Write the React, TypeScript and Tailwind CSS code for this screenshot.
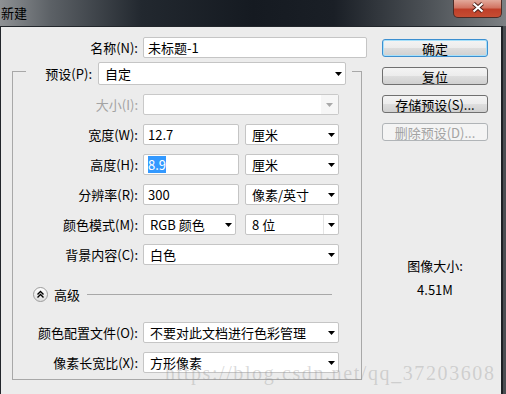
import type { ReactNode } from "react";
import clsx from "clsx";

const fieldBox =
  "flex h-[21px] items-center rounded-[2px] border border-[#c5c5c5] bg-white";

function Arrow({ disabled }: { disabled?: boolean }) {
  return (
    <svg width="7" height="4" viewBox="0 0 7 4" className="block">
      <path d="M0 0h7L3.5 4z" fill={disabled ? "#a9a9a9" : "#000"} />
    </svg>
  );
}

type SelectProps = {
  value?: ReactNode;
  className?: string;
  split?: boolean;
  disabled?: boolean;
};

function Select({ value, className, split, disabled }: SelectProps) {
  return (
    <div
      className={clsx(
        fieldBox,
        disabled && "border-[#c9c9c9] bg-[#eeeeee]",
        className,
      )}
    >
      <span className="flex-1 whitespace-nowrap pl-[6px]">{value}</span>
      {split && <span className="h-full w-px bg-[#e4e4e4]" />}
      <span
        className={clsx(
          "flex h-full items-center justify-center",
          split ? "w-[14px]" : "w-[13px]",
          disabled && "w-[17px] bg-[#f6f6f6]",
        )}
      >
        <Arrow disabled={disabled} />
      </span>
    </div>
  );
}

function Label({
  children,
  disabled,
}: {
  children: ReactNode;
  disabled?: boolean;
}) {
  return (
    <span
      className={clsx(
        "w-[125px] shrink-0 whitespace-nowrap text-right",
        disabled && "text-[#a3a3a3]",
      )}
    >
      {children}
    </span>
  );
}

function Row({ children }: { children: ReactNode }) {
  return <div className="flex h-[21px] items-center gap-[5px]">{children}</div>;
}

const btn =
  "flex h-[18px] items-center justify-center rounded-[3px] border bg-[linear-gradient(#f4f4f4,#ececec_50%,#dedede_50%,#d0d0d0)]";

export default function App() {
  return (
    <div className="flex h-[394px] w-[506px] flex-col overflow-hidden bg-[#5a5e62] font-['Noto_Sans_CJK_SC',sans-serif] text-[13px] leading-[19px] text-black">
      {/* title bar */}
      <div className="flex h-[26px] shrink-0 items-start justify-between bg-[linear-gradient(90deg,#8e9194_0%,#5c6166_10%,#22282f_28%,#151a21_50%,#1a1f26_66%,#4b5055_84%,#7c8083_100%)]">
        <span className="pl-px pt-[3px]">新建</span>
        <button className="mr-[4px] flex h-[18px] w-[49px] items-start justify-center rounded-b-[5px] border border-t-0 border-[#4b2c27] bg-[linear-gradient(#e2a99b,#d27563_45%,#bf3f29_55%,#c64d33)] pt-[2px]">
          <svg width="14" height="11" viewBox="0 0 14 11">
            <path
              d="M2.5 1.5L11.5 9.5M11.5 1.5L2.5 9.5"
              stroke="#4a1e16"
              strokeWidth="4"
            />
            <path
              d="M2.5 1.5L11.5 9.5M11.5 1.5L2.5 9.5"
              stroke="#fff"
              strokeWidth="2.2"
            />
          </svg>
        </button>
      </div>

      <div className="flex min-h-0 flex-1">
        {/* client area */}
        <div className="relative flex flex-1 border-l border-t border-[#22262b] bg-[#ececec]">
          <div className="w-[370px] shrink-0">
            <div className="mt-[10px] flex h-[20px] items-center gap-[5px]">
              <span className="w-[137px] text-right">名称(N):</span>
              <div className={clsx(fieldBox, "h-[20px] w-[224px] pl-[4px]")}>
                未标题-1
              </div>
            </div>

            <fieldset className="ml-[11px] w-[350px] border border-[#a8a8a8] pb-[6px]">
              <legend className="ml-[13px] flex items-center pr-[6px] pt-[5px]">
                <span className="w-[66px] whitespace-nowrap text-right">预设(P):</span>
                <Select className="ml-[6px] h-[23px] w-[248px]" value="自定" />
              </legend>

              <div className="mt-[9px] flex flex-col gap-[9px]">
                <Row>
                  <Label disabled>大小(I):</Label>
                  <Select className="w-[196px]" disabled />
                </Row>
                <Row>
                  <Label>宽度(W):</Label>
                  <div className={clsx(fieldBox, "w-[96px] pl-[4px]")}>12.7</div>
                  <Select className="ml-[1px] w-[94px]" value="厘米" />
                </Row>
                <Row>
                  <Label>高度(H):</Label>
                  <div className={clsx(fieldBox, "w-[96px] pl-[4px]")}>
                    <span className="bg-[#3399ff] leading-[17px] text-white">8.9</span>
                  </div>
                  <Select className="ml-[1px] w-[94px]" value="厘米" />
                </Row>
                <Row>
                  <Label>分辨率(R):</Label>
                  <div className={clsx(fieldBox, "w-[96px] pl-[4px]")}>300</div>
                  <Select className="ml-[1px] w-[94px]" value="像素/英寸" />
                </Row>
                <Row>
                  <Label>颜色模式(M):</Label>
                  <Select className="w-[93px]" value="RGB 颜色" />
                  <Select className="ml-[4px] w-[94px]" value="8 位" split />
                </Row>
                <Row>
                  <Label>背景内容(C):</Label>
                  <Select className="w-[196px]" value="白色" />
                </Row>

                <div className="mt-[12px] flex h-[16px] items-center">
                  <span className="ml-[20px] flex h-[15px] w-[15px] items-center justify-center rounded-full border border-[#9c9c9c] bg-[linear-gradient(#ffffff,#dedede)]">
                    <svg width="9" height="9" viewBox="0 0 9 9">
                      <path
                        d="M1.5 4.5L4.5 1.5L7.5 4.5M1.5 7.5L4.5 4.5L7.5 7.5"
                        fill="none"
                        stroke="#000"
                        strokeWidth="1.4"
                      />
                    </svg>
                  </span>
                  <span className="ml-[6px]">高级</span>
                  <span className="ml-[7px] h-px w-[245px] bg-[#a8a8a8]" />
                </div>

                <div className="mt-[11px] flex flex-col gap-[9px]">
                  <Row>
                    <Label>颜色配置文件(O):</Label>
                    <Select className="w-[196px]" value="不要对此文档进行色彩管理" />
                  </Row>
                  <Row>
                    <Label>像素长宽比(X):</Label>
                    <Select className="w-[196px]" value="方形像素" />
                  </Row>
                </div>
              </div>
            </fieldset>
          </div>

          <div className="ml-[11px] flex w-[106px] flex-col pt-[12px]">
            <div className={clsx(btn, "border-[#3c8fd0] shadow-[inset_0_0_0_1px_#a6e0fa]")}>
              确定
            </div>
            <div className={clsx(btn, "mt-[10px] border-[#707070]")}>复位</div>
            <div className={clsx(btn, "mt-[10px] border-[#707070]")}>
              存储预设(S)...
            </div>
            <div className="mt-[10px] flex h-[18px] items-center justify-center rounded-[3px] border border-[#b0b4b7] bg-[#f4f4f4] text-[#a3a3a3]">
              删除预设(D)...
            </div>

            <div className="mt-[115px] text-center">图像大小:</div>
            <div className="mt-[5px] text-center">4.51M</div>
          </div>

          <span className="absolute left-[164px] top-[335px] whitespace-nowrap font-['Liberation_Serif',serif] text-[20px] leading-[23px] tracking-[1.6px] text-[#969696]/35">
            https://blog.csdn.net/qq_37203608
          </span>
        </div>

        <div className="w-[5px] shrink-0 border-l-2 border-[#1e2125] bg-[#4a4e52]" />
      </div>
    </div>
  );
}
